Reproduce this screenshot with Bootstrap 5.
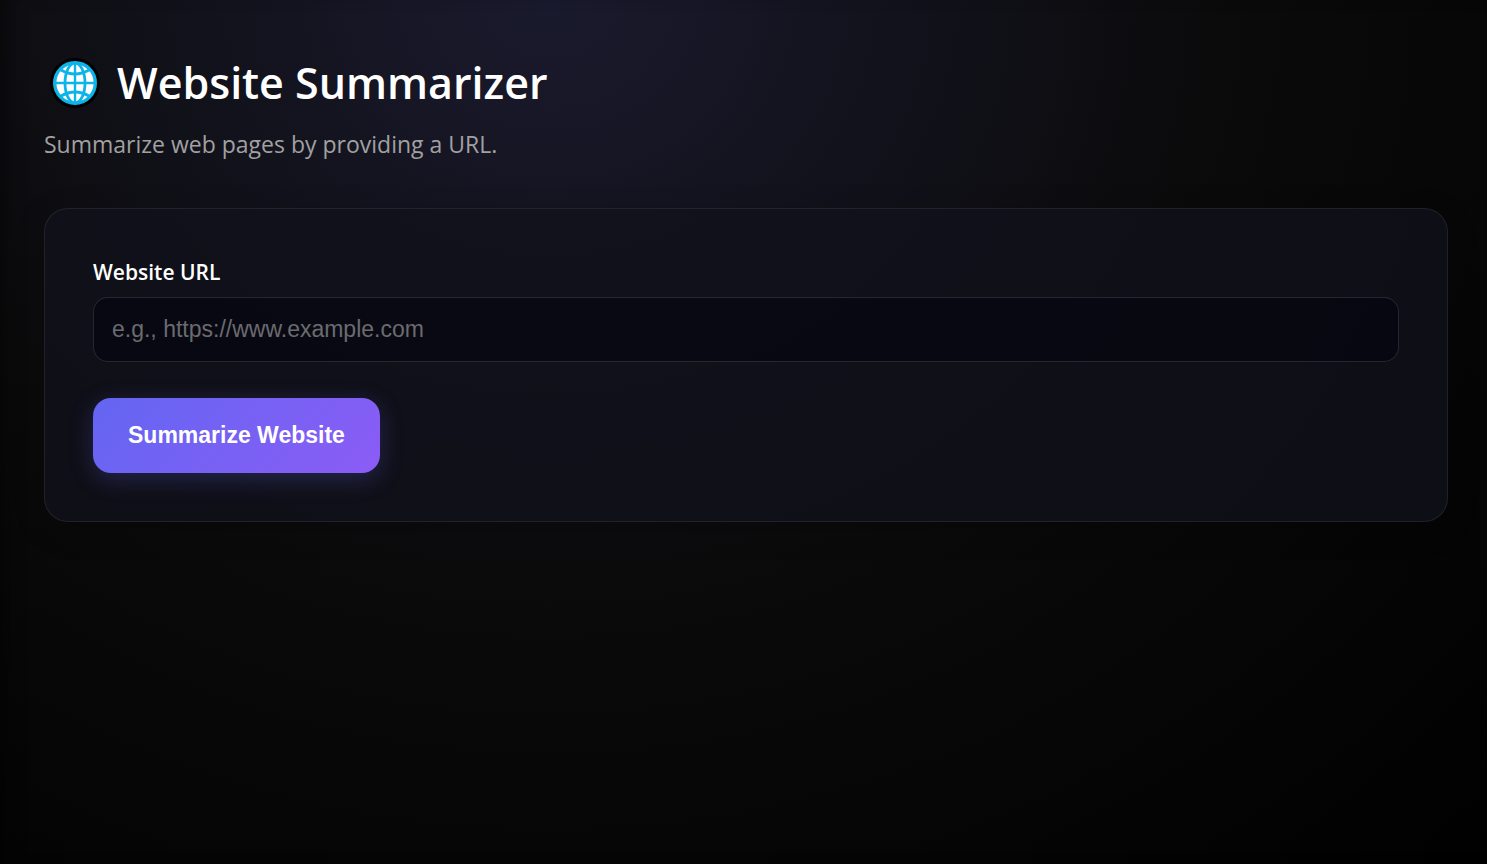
<!DOCTYPE html>
<html lang="en">
<head>
<meta charset="utf-8">
<meta name="viewport" content="width=device-width, initial-scale=1">
<title>Website Summarizer</title>
<link href="https://cdn.jsdelivr.net/npm/bootstrap@5.3.0/dist/css/bootstrap.min.css" rel="stylesheet">
<style>
  body {
    font-family: "Open Sans", "Noto Sans", sans-serif;
    color: #fff;
    background: #000 radial-gradient(ellipse 1400px 1222px at 550px 0, #1a1a2e 0%, #0a0a0a 50%, #000 100%) no-repeat;
    box-shadow: inset 16px 0 20px -12px rgba(0, 0, 0, .5);
  }
  .page { padding: 52px 39px 40px 44px; }
  .page-title { font-size: 43px; line-height: 62px; font-weight: 600; gap: 16px; margin-bottom: 14px; }
  .globe { width: 52px; height: 52px; margin-left: 5px; }
  .subtitle { font-size: 23px; line-height: 32px; color: #a1a1a1; }
  .panel {
    --bs-card-bg: rgba(18, 18, 28, .75);
    --bs-card-border-color: rgba(255, 255, 255, .08);
    --bs-card-border-radius: 24px;
    color: #fff;
    box-shadow: 0 8px 32px rgba(0, 0, 0, .2);
  }
  .panel .card-body { padding: 48px; }
  .url-label { font-size: 21px; line-height: 30px; font-weight: 600; margin-bottom: 10px; }
  .url-input, .url-input:focus {
    height: 65px;
    padding: 0 18px;
    font: 23px "Liberation Sans", sans-serif;
    color: #fff;
    background: rgba(0, 0, 10, .45);
    border: 1px solid rgba(255, 255, 255, .12);
    border-radius: 15px;
  }
  .url-input::placeholder { color: #6b6b6f; }
  .btn-summarize, .btn-summarize:hover {
    height: 75px;
    margin-top: 36px;
    padding: 0 35px;
    font: bold 23px "Liberation Sans", sans-serif;
    color: #fff;
    background: linear-gradient(135deg, #6366f1, #8b5cf6);
    border: 0;
    border-radius: 18px;
    box-shadow: 0 6px 23px rgba(99, 102, 241, .25);
  }
</style>
</head>
<body class="min-vh-100">
<main class="page">
  <header>
    <h1 class="page-title d-flex align-items-center">
      <svg class="globe" viewBox="0 0 52 52" aria-hidden="true">
        <circle cx="26" cy="26" r="25" fill="#000"/>
        <circle cx="26" cy="26" r="21" fill="#fff"/>
        <g fill="none" stroke="#0db4e9" stroke-width="2.4">
          <circle cx="26" cy="26" r="20.3" stroke-width="3.4"/>
          <ellipse cx="26" cy="26" rx="10" ry="20" stroke-width="2.8"/>
          <path d="M26 6v40M6 26h40"/>
          <path d="M12 13Q26 21 40 13M12 39Q26 31 40 39" stroke-width="3"/>
        </g>
      </svg>
      <span>Website Summarizer</span>
    </h1>
    <p class="subtitle mb-5">Summarize web pages by providing a URL.</p>
  </header>
  <section class="card panel">
    <form class="card-body">
      <label for="url" class="url-label">Website URL</label>
      <input id="url" type="url" class="form-control url-input" placeholder="e.g., https://www.example.com">
      <button type="button" class="btn btn-summarize">Summarize Website</button>
    </form>
  </section>
</main>
<script src="https://cdn.jsdelivr.net/npm/bootstrap@5.3.0/dist/js/bootstrap.bundle.min.js"></script>
</body>
</html>
